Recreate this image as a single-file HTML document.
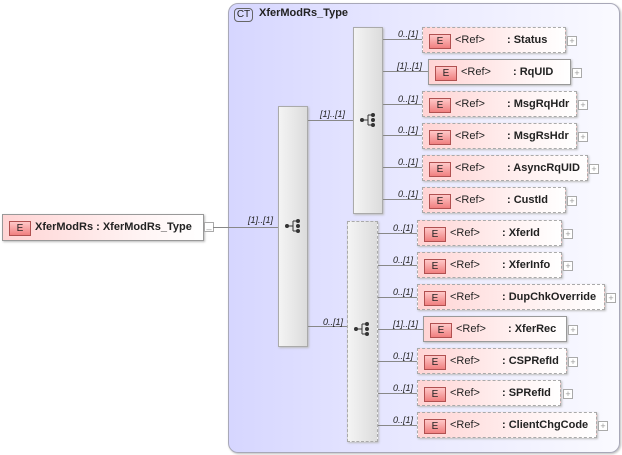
<!DOCTYPE html>
<html><head><meta charset="utf-8"><style>
*{margin:0;padding:0;box-sizing:border-box}
body{width:622px;height:455px;background:#fff;position:relative;overflow:hidden;font-family:"Liberation Sans",Arial,sans-serif}
.a{position:absolute}
.ct{left:228px;top:3px;width:392px;height:450px;border:1px solid #a8a8b8;border-radius:10px;background:linear-gradient(90deg,#d6d6ff 0%,#e8e8ff 45%,#fafaff 100%);box-shadow:1px 1px 2px #bbb}
.ctb{left:234px;top:8px;width:19px;height:14px;border:1px solid #666;border-radius:4px;background:#d8d8ff;font-size:10px;text-align:center;line-height:12px;color:#222}
.seq{background:linear-gradient(90deg,#f4f4f4,#dcdcdc);border:1px solid #aaa;box-shadow:1px 1px 2px #bbb}
.dash{border:1px dashed #aaa}
.el{height:26px;background:linear-gradient(90deg,#ffd4d4,#fff4f4 70%,#fff);border:1px solid #999;box-shadow:1px 1px 2px #bbb;font-size:11px;font-weight:bold;color:#222}
.el.d{border:1px dashed #aaa}
.e{position:absolute;left:6px;top:6px;width:22px;height:15px;border:1px solid #b05050;background:linear-gradient(#ffc8c8,#f08080);font-size:10px;font-weight:normal;text-align:center;line-height:13px;color:#222}
.r{position:absolute;left:32px;top:6px;font-weight:normal}
.n{position:absolute;top:6px}
.p{width:10px;height:10px;border:1px solid #aaa;background:#fff;font-size:9px;line-height:8px;text-align:center;color:#999}
.h{height:1px;background:#888}
.v{width:1px;background:#888}
.lb{font-size:9px;font-style:italic;color:#222}
</style></head><body>
<div class="a ct"></div>
<div class="a ctb">CT</div>
<div class="a" style="left:259px;top:7px;font-size:11px;font-weight:bold;color:#222">XferModRs_Type</div>

<div class="a el" style="left:2px;top:214px;width:202px;height:27px">
<div class="e">E</div><div class="n" style="left:32px;top:6px">XferModRs : XferModRs_Type</div></div>
<div class="a p" style="left:204px;top:222px;line-height:4px">_</div>
<div class="a h" style="left:213px;top:227px;width:65px"></div>
<div class="a lb" style="left:248px;top:215px">[1]..[1]</div>

<div class="a seq" style="left:278px;top:106px;width:30px;height:241px"></div>
<svg class="a" style="left:284px;top:218px" width="20" height="16"><circle cx="3" cy="8" r="2" fill="#333"/><line x1="3" y1="8" x2="9" y2="8" stroke="#333"/><line x1="9" y1="3" x2="9" y2="13" stroke="#333"/><line x1="9" y1="3" x2="14" y2="3" stroke="#333"/><line x1="9" y1="13" x2="14" y2="13" stroke="#333"/><circle cx="14" cy="3" r="2" fill="#333"/><circle cx="14" cy="8" r="2" fill="#333"/><circle cx="14" cy="13" r="2" fill="#333"/></svg>
<div class="a h" style="left:308px;top:120px;width:45px"></div>
<div class="a lb" style="left:320px;top:109px">[1]..[1]</div>
<div class="a h" style="left:308px;top:326px;width:39px"></div>
<div class="a lb" style="left:323px;top:317px">0..[1]</div>

<div class="a seq" style="left:353px;top:27px;width:30px;height:187px"></div>
<svg class="a" style="left:359px;top:112px" width="20" height="16"><circle cx="3" cy="8" r="2" fill="#333"/><line x1="3" y1="8" x2="9" y2="8" stroke="#333"/><line x1="9" y1="3" x2="9" y2="13" stroke="#333"/><line x1="9" y1="3" x2="14" y2="3" stroke="#333"/><line x1="9" y1="13" x2="14" y2="13" stroke="#333"/><circle cx="14" cy="3" r="2" fill="#333"/><circle cx="14" cy="8" r="2" fill="#333"/><circle cx="14" cy="13" r="2" fill="#333"/></svg>

<div class="a seq dash" style="left:347px;top:221px;width:31px;height:221px"></div>
<svg class="a" style="left:353px;top:321px" width="20" height="16"><circle cx="3" cy="8" r="2" fill="#333"/><line x1="3" y1="8" x2="9" y2="8" stroke="#333"/><line x1="9" y1="3" x2="9" y2="13" stroke="#333"/><line x1="9" y1="3" x2="14" y2="3" stroke="#333"/><line x1="9" y1="13" x2="14" y2="13" stroke="#333"/><circle cx="14" cy="3" r="2" fill="#333"/><circle cx="14" cy="8" r="2" fill="#333"/><circle cx="14" cy="13" r="2" fill="#333"/></svg>

<div class="a h" style="left:383px;top:39px;width:39px"></div><div class="a lb" style="left:398px;top:29px">0..[1]</div>
<div class="a el d" style="left:422px;top:27px;width:144px"><div class="e">E</div><div class="r">&lt;Ref&gt;</div><div class="n" style="left:84px">: Status</div></div>
<div class="a p" style="left:567px;top:36px">+</div>

<div class="a h" style="left:383px;top:71px;width:45px"></div><div class="a lb" style="left:397px;top:61px">[1]..[1]</div>
<div class="a el" style="left:428px;top:59px;width:143px"><div class="e">E</div><div class="r">&lt;Ref&gt;</div><div class="n" style="left:84px">: RqUID</div></div>
<div class="a p" style="left:572px;top:68px">+</div>

<div class="a h" style="left:383px;top:104px;width:39px"></div><div class="a lb" style="left:398px;top:94px">0..[1]</div>
<div class="a el d" style="left:422px;top:91px;width:155px"><div class="e">E</div><div class="r">&lt;Ref&gt;</div><div class="n" style="left:84px">: MsgRqHdr</div></div>
<div class="a p" style="left:578px;top:100px">+</div>

<div class="a h" style="left:383px;top:135px;width:39px"></div><div class="a lb" style="left:398px;top:125px">0..[1]</div>
<div class="a el d" style="left:422px;top:123px;width:155px"><div class="e">E</div><div class="r">&lt;Ref&gt;</div><div class="n" style="left:84px">: MsgRsHdr</div></div>
<div class="a p" style="left:578px;top:132px">+</div>

<div class="a h" style="left:383px;top:167px;width:39px"></div><div class="a lb" style="left:398px;top:157px">0..[1]</div>
<div class="a el d" style="left:422px;top:155px;width:166px"><div class="e">E</div><div class="r">&lt;Ref&gt;</div><div class="n" style="left:84px">: AsyncRqUID</div></div>
<div class="a p" style="left:589px;top:164px">+</div>

<div class="a h" style="left:383px;top:199px;width:39px"></div><div class="a lb" style="left:398px;top:189px">0..[1]</div>
<div class="a el d" style="left:422px;top:187px;width:144px"><div class="e">E</div><div class="r">&lt;Ref&gt;</div><div class="n" style="left:84px">: CustId</div></div>
<div class="a p" style="left:567px;top:196px">+</div>

<div class="a h" style="left:378px;top:233px;width:39px"></div><div class="a lb" style="left:393px;top:223px">0..[1]</div>
<div class="a el d" style="left:417px;top:220px;width:145px"><div class="e">E</div><div class="r">&lt;Ref&gt;</div><div class="n" style="left:84px">: XferId</div></div>
<div class="a p" style="left:563px;top:229px">+</div>

<div class="a h" style="left:378px;top:265px;width:39px"></div><div class="a lb" style="left:393px;top:255px">0..[1]</div>
<div class="a el d" style="left:417px;top:252px;width:145px"><div class="e">E</div><div class="r">&lt;Ref&gt;</div><div class="n" style="left:84px">: XferInfo</div></div>
<div class="a p" style="left:563px;top:261px">+</div>

<div class="a h" style="left:378px;top:297px;width:39px"></div><div class="a lb" style="left:393px;top:287px">0..[1]</div>
<div class="a el d" style="left:417px;top:284px;width:188px"><div class="e">E</div><div class="r">&lt;Ref&gt;</div><div class="n" style="left:84px">: DupChkOverride</div></div>
<div class="a p" style="left:606px;top:293px">+</div>

<div class="a h" style="left:378px;top:329px;width:45px"></div><div class="a lb" style="left:393px;top:319px">[1]..[1]</div>
<div class="a el" style="left:423px;top:316px;width:144px"><div class="e">E</div><div class="r">&lt;Ref&gt;</div><div class="n" style="left:84px">: XferRec</div></div>
<div class="a p" style="left:568px;top:325px">+</div>

<div class="a h" style="left:378px;top:361px;width:39px"></div><div class="a lb" style="left:393px;top:351px">0..[1]</div>
<div class="a el d" style="left:417px;top:348px;width:150px"><div class="e">E</div><div class="r">&lt;Ref&gt;</div><div class="n" style="left:84px">: CSPRefId</div></div>
<div class="a p" style="left:568px;top:357px">+</div>

<div class="a h" style="left:378px;top:393px;width:39px"></div><div class="a lb" style="left:393px;top:383px">0..[1]</div>
<div class="a el d" style="left:417px;top:380px;width:144px"><div class="e">E</div><div class="r">&lt;Ref&gt;</div><div class="n" style="left:84px">: SPRefId</div></div>
<div class="a p" style="left:563px;top:389px">+</div>

<div class="a h" style="left:378px;top:425px;width:39px"></div><div class="a lb" style="left:393px;top:415px">0..[1]</div>
<div class="a el d" style="left:417px;top:412px;width:180px"><div class="e">E</div><div class="r">&lt;Ref&gt;</div><div class="n" style="left:84px">: ClientChgCode</div></div>
<div class="a p" style="left:598px;top:421px">+</div>
</body></html>
